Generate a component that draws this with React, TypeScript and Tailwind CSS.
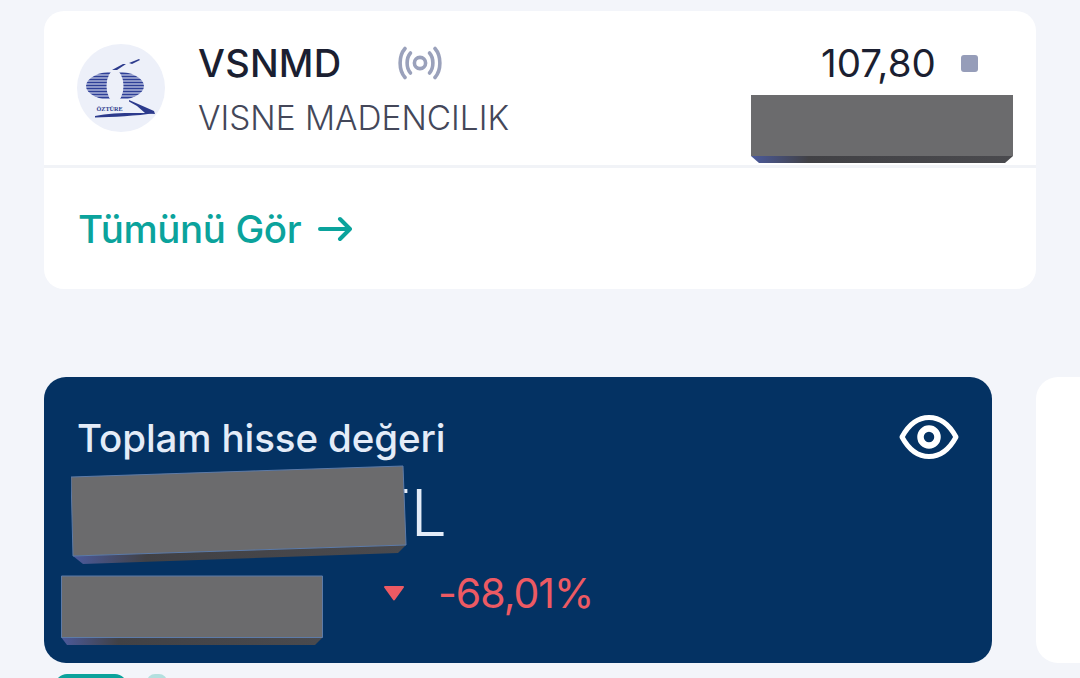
import React from "react";

function Logo() {
  const ys = [-12.5, -9.5, -6.5, -3.5, -0.5, 2.5, 5.5, 8.5, 11.5];
  return (
    <svg viewBox="0 0 88 88" className="w-[88px] h-[88px]">
      <circle cx="44" cy="44" r="44" fill="#edf0f9" />
      <defs>
        <clipPath id="oval">
          <ellipse cx="38" cy="42" rx="29" ry="14.5" />
        </clipPath>
      </defs>
      <g clipPath="url(#oval)">
        {ys.map((d) => (
          <rect key={d} x="5" y={42 + d - 1} width="68" height="2" fill="#2e3f97" />
        ))}
      </g>
      <ellipse cx="38" cy="42" rx="8.5" ry="16" fill="#edf0f9" />
      <path d="M35 26 L46 20 L49 20 L40 26 Z M52 19 L62 15 L63 16 L55 20 Z" fill="#2c3a8c" />
      <path d="M52 56 L77 67 L78 70 L68 69 L60 62 L52 57.5 Z" fill="#2c3a8c" />
      <path d="M18 72 C 35 68, 60 69, 78 69 C 60 72, 35 73, 18 73.5 Z" fill="#2c3a8c" />
      <text x="19.5" y="67" fontSize="6.2" fontFamily="'Liberation Serif', serif" fill="#2c3a8c" fontWeight="700">ÖZTÜRE</text>
    </svg>
  );
}

function Signal() {
  return (
    <svg viewBox="0 0 44 34" className="w-[44px] h-[34px]" fill="none" stroke="#9aa1bb" strokeLinecap="round" strokeWidth="3.6">
      <circle cx="22" cy="17" r="5.6" strokeWidth="3.6" />
      <path d="M12.5 7 C 8 12, 8 22, 12.5 27" />
      <path d="M7 2.5 C 0.5 10, 0.5 24, 7 31.5" />
      <path d="M31.5 7 C 36 12, 36 22, 31.5 27" />
      <path d="M37 2.5 C 43.5 10, 43.5 24, 37 31.5" />
    </svg>
  );
}

function Eye() {
  return (
    <svg viewBox="0 0 60 44" className="w-[60px] h-[44px]" fill="none" stroke="#ffffff">
      <path d="M3 22 C 10 9, 20 2.5, 30 2.5 C 40 2.5, 50 9, 57 22 C 50 35, 40 41.5, 30 41.5 C 20 41.5, 10 35, 3 22 Z" strokeWidth="5" strokeLinejoin="round" />
      <circle cx="30" cy="22" r="8.5" strokeWidth="6.5" />
    </svg>
  );
}

function Blocks({ kind }: { kind: "a" | "b" | "c" }) {
  const strip = (
    <defs>
      <linearGradient id={`strip-${kind}`} x1="0" x2="1" y1="0" y2="0">
        <stop offset="0" stopColor="#4b5a9c" />
        <stop offset="0.22" stopColor="#414145" />
        <stop offset="1" stopColor="#4a4a4e" />
      </linearGradient>
    </defs>
  );
  if (kind === "a") {
    return (
      <svg viewBox="0 0 262 69" className="w-[262px] h-[69px]">
        {strip}
        <path d="M0 62 L8 69 H254 L262 62 Z" fill="url(#strip-a)" />
        <path d="M0 1 H262 V62 H0 Z" fill="#6b6b6d" />
      </svg>
    );
  }
  if (kind === "b") {
    return (
      <svg viewBox="0 0 336 99" className="w-[336px] h-[99px]">
        {strip}
        <path d="M2 91 L12 99 L327 88 L335 80 Z" fill="url(#strip-b)" />
        <path d="M0 12 L332 1 L335 80 L2 91 Z" fill="#6b6b6d" stroke="#5d7ba8" strokeWidth="1" />
      </svg>
    );
  }
  return (
    <svg viewBox="0 0 262 70" className="w-[262px] h-[70px]">
      {strip}
      <path d="M0 62 L6 70 L254 70 L262 62 Z" fill="url(#strip-c)" />
      <path d="M0.5 1 H261.5 V62.5 H0.5 Z" fill="#6b6b6d" stroke="#5d7ba8" strokeWidth="1" />
    </svg>
  );
}

export default function App() {
  return (
    <div className="relative w-[1080px] h-[678px] overflow-hidden bg-[#f3f5fa] pt-[11px] font-['Inter','Noto_Sans',sans-serif]">
      <div className="ml-[44px] w-[992px] h-[278px] rounded-[20px] bg-white flex flex-col">
        <div className="relative h-[157px] shrink-0 border-b-[3px] border-[#f1f3f7] pl-[33px] pr-[58px] pt-[33px] flex items-start">
          <Logo />
          <div className="ml-[34px] flex-1 -mt-[1px]">
            <div className="flex items-center h-[40px]">
              <span className="text-[38px] leading-[40px] font-medium text-[#1b1f31] w-[200px] tracking-[0.2px] -ml-[1px]">VSNMD</span>
              <Signal />
            </div>
            <div className="mt-[15px] -ml-[1px] text-[33.4px] leading-[40px] font-light text-[#444759]">VISNE MADENCILIK</div>
          </div>
          <div className="flex items-center h-[40px] -mt-[1px]">
            <span className="text-[38.5px] leading-[40px] font-normal text-[#1b1f31] tracking-[0.1px]">107,80</span>
            <span className="ml-[25px] w-[17px] h-[17px] rounded-[3px] bg-[#969db9]" />
          </div>
          <div className="absolute left-[707px] top-[83px]">
            <Blocks kind="a" />
          </div>
        </div>
        <div className="flex items-center flex-1 pl-[34px]">
          <span className="text-[38.5px] leading-[44px] font-medium text-[#0ba39c] tracking-[-0.4px]">Tümünü Gör</span>
          <svg viewBox="0 0 34 26" className="ml-[17px] w-[34px] h-[26px]" fill="none" stroke="#0ba39c" strokeWidth="4" strokeLinecap="round" strokeLinejoin="round">
            <path d="M2 13 H32 M22 3 L32 13 L22 23" />
          </svg>
        </div>
      </div>

      <div className="mt-[88px] ml-[44px] flex gap-[44px] items-stretch">
        <div className="relative w-[948px] h-[286px] shrink-0 rounded-[22px] bg-[#043263] pl-[33px] pr-[33px] pt-[38px]">
          <div className="flex items-start justify-between">
            <span className="text-[38.5px] leading-[46px] font-medium text-[#e4ecf8] tracking-[-0.1px]">Toplam hisse değeri</span>
            <span className="block"><Eye /></span>
          </div>
          <div className="flex items-center h-[76px] mt-[14px]">
            <span className="ml-[293px] text-[64px] leading-[76px] font-light text-[#e4ecf8]">TL</span>
          </div>
          <div className="flex items-center h-[52px] mt-[16px]">
            <svg viewBox="0 0 22 16" className="ml-[306px] w-[22px] h-[16px]">
              <path d="M2 2 H20 L11 14.5 Z" fill="#ed5a63" stroke="#ed5a63" strokeWidth="2" strokeLinejoin="round" />
            </svg>
            <span className="ml-[33px] text-[41px] leading-[46px] font-normal text-[#ed5a63] tracking-[-1px]">-68,01%</span>
          </div>
          <div className="absolute left-[27px] top-[88px]">
            <Blocks kind="b" />
          </div>
          <div className="absolute left-[17px] top-[198px]">
            <Blocks kind="c" />
          </div>
        </div>
        <div className="w-[100px] h-[286px] shrink-0 rounded-[22px] bg-white" />
      </div>

      <div className="ml-[55px] mt-[11px] flex items-start gap-[20px]">
        <div className="w-[72px] h-[16px] rounded-t-[12px] bg-[#0ba39c]" />
        <div className="w-[20px] h-[16px] rounded-full bg-[#b4e0df]" />
      </div>
    </div>
  );
}
